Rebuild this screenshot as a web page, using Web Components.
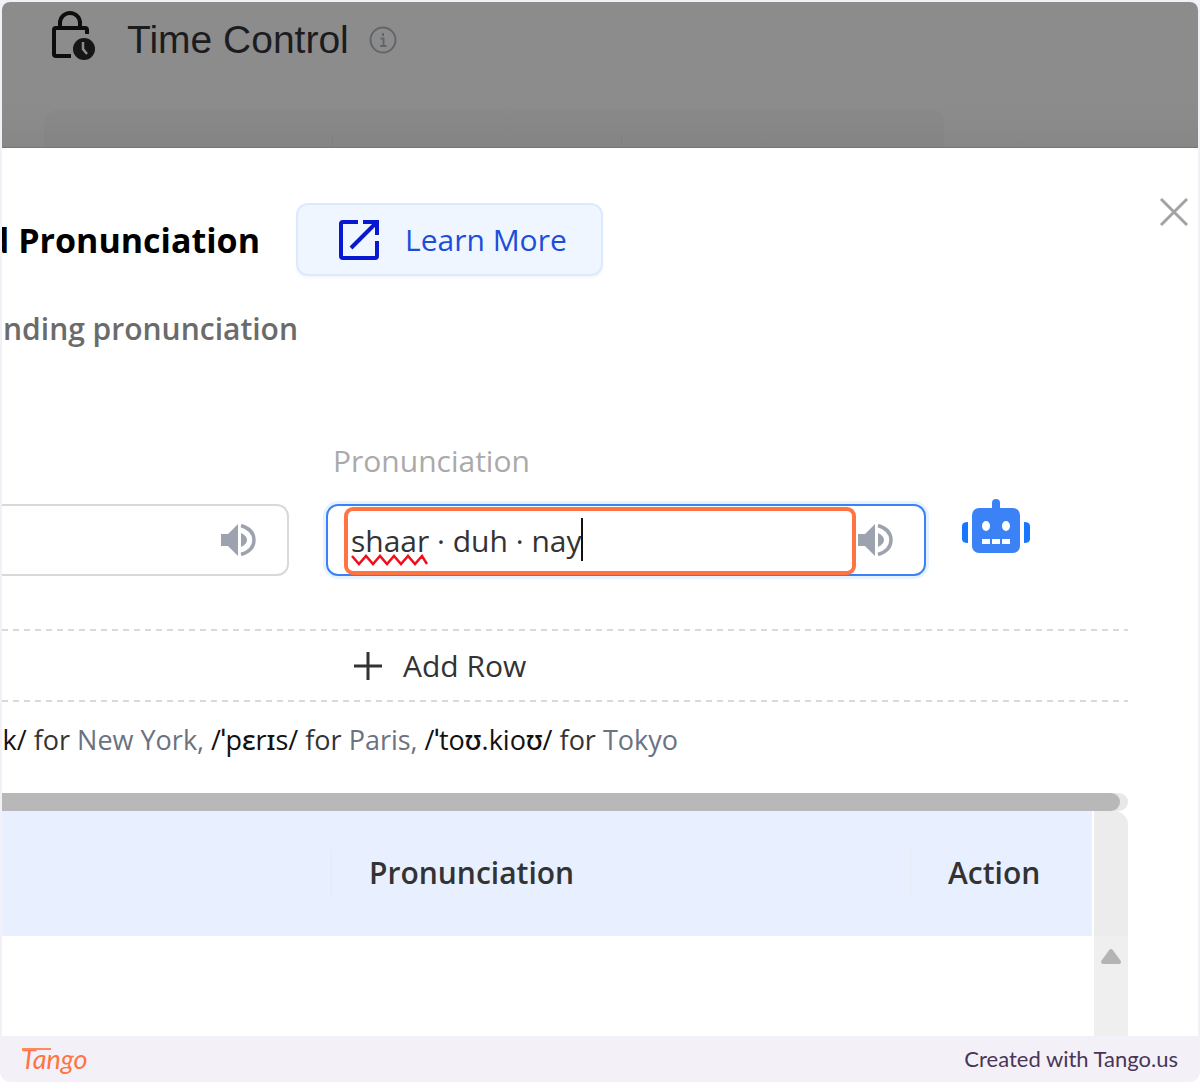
<!DOCTYPE html>
<html lang="en">
<head>
<meta charset="utf-8">
<title>Pronunciation</title>
<style>
html{background:#fff}
body{margin:0;font-family:"Open Sans","Noto Sans",sans-serif;font-size:30px;line-height:40px;color:#333}
</style>
</head>
<body>
<tango-frame>
  <page-backdrop slot="page">Time Control</page-backdrop>
  <pronunciation-dialog slot="page"></pronunciation-dialog>
</tango-frame>
<script>
const define = (name, html, setup) => customElements.define(name, class extends HTMLElement {
  constructor() {
    super();
    const t = document.createElement('template');
    t.innerHTML = '<style>*{box-sizing:border-box}svg{display:block;flex:none}</style>' + html;
    this.attachShadow({mode: 'open'}).append(t.content.cloneNode(true));
    if (setup) setup.call(this, this.shadowRoot);
  }
});

define('tango-frame', `
<style>
:host{display:flex;flex-direction:column;min-height:100vh;box-sizing:border-box;background:#f3f1f7;padding:2px 2px 0;border-radius:0 0 10px 10px;overflow:hidden}
main{flex:1;display:flex;flex-direction:column;background:#fff;border-radius:8px 8px 0 0;overflow:hidden}
footer{display:flex;align-items:center;justify-content:space-between;height:46px;padding:0 20px 0 19px;font:22px/24px Lato,sans-serif;color:#4a3558}
.logo{position:relative;font:italic 400 27px/32px Lato,sans-serif;color:#ff7442}
.logo::before{content:"";position:absolute;left:1px;top:5px;width:29px;height:2px;background:#ff8a60}
</style>
<main><slot name="page"></slot></main>
<footer><span class="logo">Tango</span><span>Created with Tango.us</span></footer>`);

define('page-backdrop', `
<style>
:host{display:block;background:linear-gradient(#8c8c8c 70%,#878787);border-bottom:1px solid #777;font:39px/48px "Liberation Sans",Arial,sans-serif;color:#1c1c1f}
header{display:flex;align-items:center;padding:8px 0 0 48px;height:64px}
h1{font:inherit;margin:0 20px 0 31px;padding-top:3px}
.lock{margin-bottom:4px}
.info{margin-top:4px}
.card{display:grid;grid-template-columns:288px 289px 1fr;margin:43px 254px 0 42px;height:38px;padding-top:26px;background:linear-gradient(#898989,#848484);border-radius:14px 14px 0 0}
.card i+i{border-left:1px solid #7f7f7f}
</style>
<header>
<svg class="lock" width="46" height="52" viewBox="0 0 46 52" fill="none" stroke="#0d0d0d" stroke-width="4"><path d="M10 18V13a10 10 0 0 1 20 0v5M37 24v-4q0-2-2-2H6q-2 0-2 2v24q0 2 2 2h15"/><circle cx="34" cy="39" r="11" fill="#161616" stroke="none"/><path d="M33 32v7l4 5" stroke="#8c8c8c" stroke-width="2.5"/></svg>
<h1><slot></slot></h1>
<svg class="info" width="28" height="28" viewBox="0 0 28 28" fill="none" stroke="#62656c" stroke-width="2"><circle cx="14" cy="14" r="12.5"/><path d="M14 7v3M11.500 12.500H14.500V20M11 20h6.500"/></svg>
</header>
<div class="card"><i></i><i></i><i></i></div>`);

define('sound-button', `
<style>
:host{display:block}
button{display:block;border:0;padding:0;background:none}
</style>
<button type="button" aria-label="Play"><svg width="36" height="34" viewBox="0 0 36 34"><path fill="#9ca3af" d="M1 11h7L18 1v32L8 23H1z"/><path fill="#9ca3af" d="M21 10q6 3 6 7t-6 7z"/><path d="M21 2.500q13 4 13 14.500t-13 14.500" fill="none" stroke="#9ca3af" stroke-width="3.500"/></svg></button>`);

define('sound-field', `
<style>
:host{display:flex;align-items:center;position:relative;box-sizing:border-box;height:72px;border:2px solid #d9d9d9;border-radius:12px;background:#fff;padding-right:31px}
:host([cut]){border-left:0;border-radius:0 12px 12px 0}
:host([active]){border-color:#3b82f6;box-shadow:0 0 0 3px #e6f3ff}
input{flex:1;min-width:0;width:0;border:0;outline:0;background:none;padding:0 0 0 23px;height:60px;font:inherit;color:#333}
.mark{display:none;position:absolute;left:16px;right:68px;top:1px;height:68px;border:4px solid #ff7442;border-radius:9px}
.wave{display:none;position:absolute;left:23px;top:48px}
.caret{display:none;position:absolute;left:253px;top:12px;width:2px;height:43px;background:#111}
:host([active]) .mark,:host([active]) .wave,:host([active]) .caret{display:block}
</style>
<input type="text" spellcheck="false"><sound-button></sound-button>
<svg class="wave" width="78" height="12" viewBox="0 0 78 12" fill="none" stroke="#f0101c" stroke-width="2.500"><path d="M1 2l7 8 7-8 7 8 7-8 7 8 7-8 7 8 7-8 7 8 7-8 5 8"/></svg>
<span class="caret"></span><span class="mark"></span>`, function (r) {
  const i = r.querySelector('input');
  i.value = this.getAttribute('value') || '';
  i.setAttribute('aria-label', this.getAttribute('label'));
});

define('learn-link', `
<style>
:host{display:block}
a{display:flex;align-items:center;gap:25px;box-sizing:border-box;height:73px;padding:0 34px 0 40px;border:2px solid #dbeafe;border-radius:12px;background:#eff6ff;box-shadow:0 2px 3px #0000000a;color:#1d4ed8;text-decoration:none}
</style>
<a href="#"><svg width="42" height="42" viewBox="0 0 42 42" fill="none" stroke="#0718d0" stroke-width="4"><path d="M20 3H5Q3 3 3 5v32q0 2 2 2h32q2 0 2-2V22"/><path d="M25 3h14v13M38 4L13 29"/></svg><slot></slot></a>`);

define('word-table', `
<style>
:host{display:grid;grid-template-columns:1fr 34px;column-gap:2px;grid-template-rows:18px 125px 1fr}
.bar{grid-column:1/3;background:#e8e8e8;border-radius:0 9px 9px 0;padding-right:8px}
.bar i{display:block;height:18px;background:#b8b8b8;border-radius:0 9px 9px 0}
table{border-collapse:collapse;table-layout:fixed;width:100%;height:125px;background:#e8efff;border-bottom:1px solid #eee}
th{padding:0;text-align:left;font-weight:600;font-size:30px;color:#333}
th:nth-child(1){width:329px}
th:nth-child(3){width:182px}
th span{display:flex;align-items:center;height:48px;padding-left:37px}
th+th span{border-left:1px solid #e5eaf3}
.top{background:#ececec;border-radius:0 14px 0 0}
.track{grid-column:2;background:#efefef;padding:11px 6px}
</style>
<div class="bar"><i></i></div>
<table><thead><tr><th aria-label="Word"></th><th><span>Pronunciation</span></th><th><span>Action</span></th></tr></thead></table>
<div class="top"></div>
<div class="track"><svg width="22" height="18" viewBox="0 0 22 18"><path d="M11 4L3 15h16z" fill="#b4b4b4" stroke="#b4b4b4" stroke-width="4" stroke-linejoin="round"/></svg></div>`);

define('pronunciation-dialog', `
<style>
:host{flex:1;display:flex;flex-direction:column;background:#fff}
button{border:0;padding:0;margin:0;background:none;font:inherit;color:inherit}
.head{display:flex;align-items:flex-start;padding:55px 8px 0 0}
.clip{display:flex;justify-content:flex-end;overflow:hidden;white-space:pre}
h2{width:258px;margin:16px 36px 0 0;font-size:34px;font-weight:700;line-height:42px;color:#000}
.close{margin:-7px 0 0 auto}
.sub{width:296px;margin:33px 0 0;font-weight:600;font-size:30px;color:#6b6b6b}
.grid{display:grid;grid-template-columns:287px 600px 70px;column-gap:37px;row-gap:21px;margin-top:92px;align-items:center}
.grid label{grid-column:2;padding-left:7px;height:42px;color:#aaa}
.grid [cut]{grid-column:1}
.bot{margin:-28px 0 0 -2px}
.add{height:69px;display:flex;align-items:center;gap:20px;padding-left:351px}
.line{display:block;height:2px;margin-right:70px;background:repeating-linear-gradient(90deg,#d9d9d9 0 6px,#fff 6px 11px)}
.grid+.line{margin-top:53px}
.hint{width:676px;margin:18px 0 33px;font-size:27px;color:#333}
.hint a{color:#6b7280;text-decoration:none}
.hint b{font-weight:500;color:#111}
word-table{flex:1;margin-right:70px}
</style>
<div class="head">
<h2 class="clip">d Pronunciation</h2>
<learn-link>Learn More</learn-link>
<button class="close" type="button" aria-label="Close"><svg width="32" height="32" viewBox="0 0 32 32" stroke="#a3a3a3" stroke-width="3"><path d="M3 3l26 26M29 3L3 29"/></svg></button>
</div>
<p class="sub clip">onding pronunciation</p>
<div class="grid">
<label>Pronunciation</label>
<sound-field cut label="Word"></sound-field>
<sound-field active label="Pronunciation" value="shaar · duh · nay"></sound-field>
<button class="bot" type="button" aria-label="Generate"><svg width="70" height="56" viewBox="0 0 70 56" fill="#3b82f6"><path d="M31 12V5q0-4 4-4t4 4v7z"/><rect x="11" y="10" width="48" height="45" rx="7"/><path fill="#1677ff" d="M7 24v21q-6 0-6-4V28q0-4 6-4zM63 24v21q6 0 6-4V28q0-4-6-4z"/><g fill="#fff"><ellipse cx="25" cy="28" rx="4" ry="5"/><ellipse cx="45" cy="28" rx="4" ry="5"/><path d="M21 41h8v5h-8zM31 41h8v5h-8zM41 41h8v5h-8z"/></g></svg></button>
</div>
<span class="line"></span>
<button class="add" type="button"><svg width="30" height="30" viewBox="0 0 30 30" stroke="#333" stroke-width="3"><path d="M15 1v28M1 15h28"/></svg>Add Row</button>
<span class="line"></span>
<p class="hint clip"><span><b>k/</b> for <a href="#">New York,</a> <b>/ˈpɛrɪs/</b> for <a href="#">Paris,</a> <b>/ˈtoʊ.kioʊ/</b> for <a href="#">Tokyo</a></span></p>
<word-table></word-table>`);
</script>
</body>
</html>
